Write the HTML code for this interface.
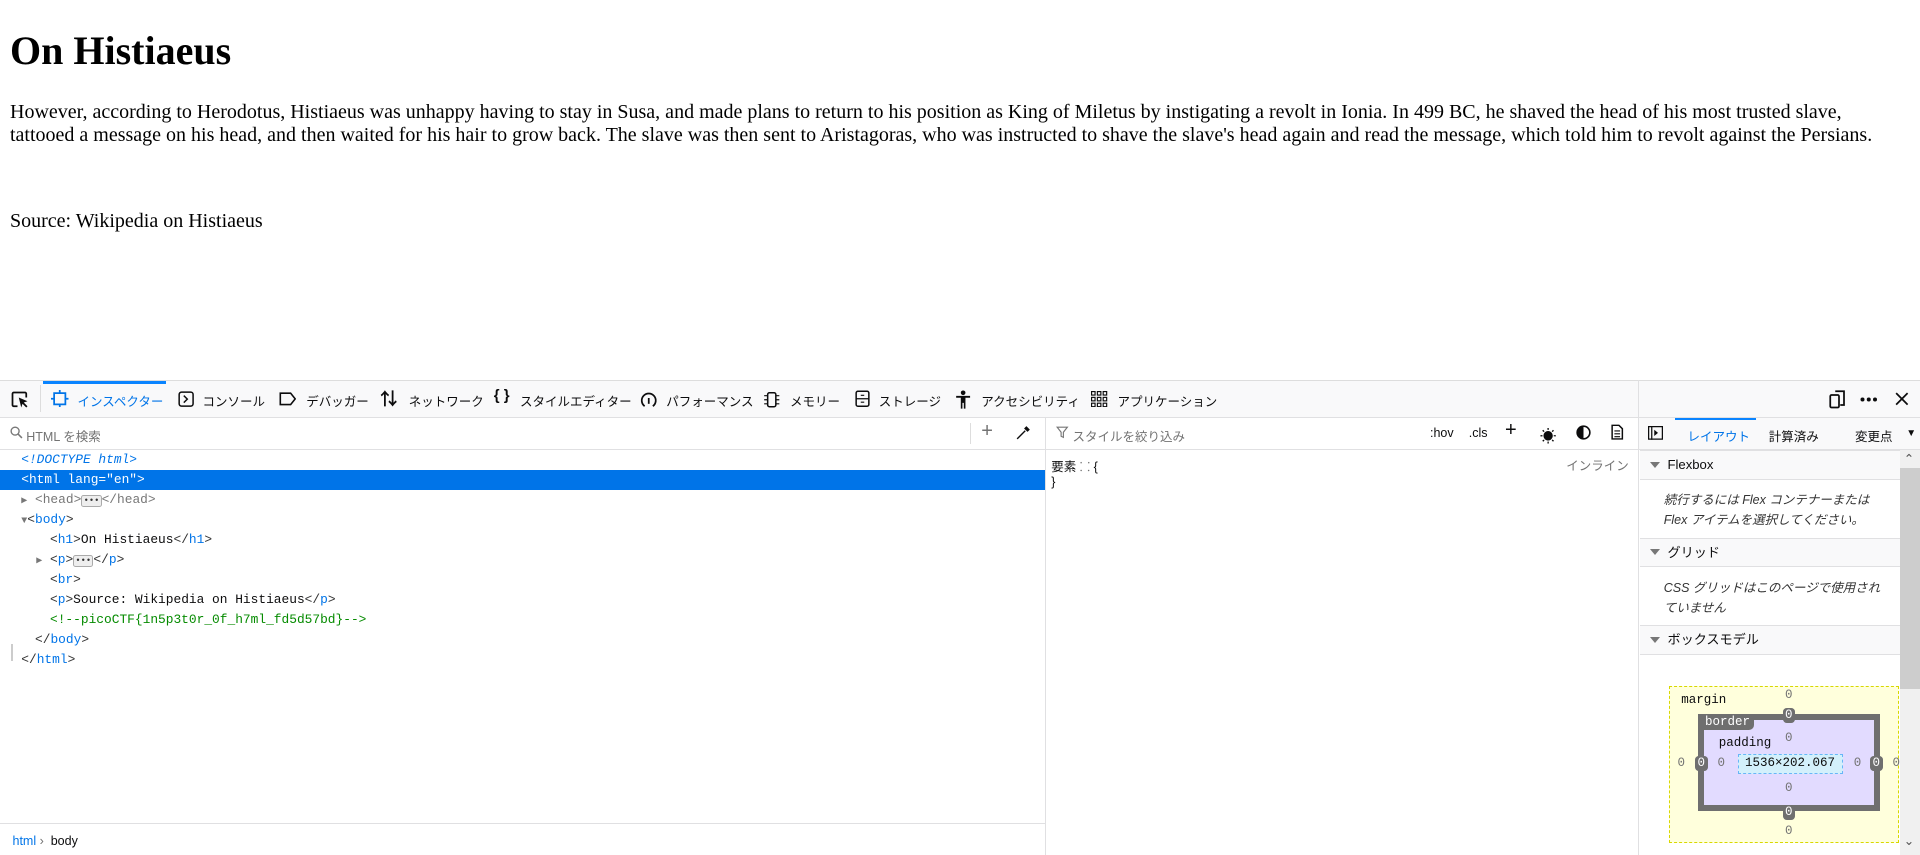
<!DOCTYPE html>
<html><head><meta charset="utf-8">
<style>
html,body{margin:0;padding:0;}
body{zoom:1.25;width:1536px;height:684px;overflow:hidden;position:relative;background:#fff;font-family:"Liberation Serif","Noto Serif CJK SC",serif;}
#page{position:absolute;left:0;top:0;width:1536px;height:305px;overflow:hidden}
#page .c{margin:8px}
#page h1{font-size:32px;margin:21.44px 0;font-weight:bold}
#page p{font-size:16px;margin:16px 0;line-height:18.4px}
#dt{position:absolute;left:0;top:304px;width:1536px;height:380px;font-family:"Liberation Sans","Noto Sans CJK JP",sans-serif;font-size:10px;color:#0c0c0d;}
.a{position:absolute;white-space:nowrap}
#tb{position:absolute;left:0;top:0;width:1536px;height:29px;background:#f9f9fa;border-top:1px solid #ddd;border-bottom:1px solid #e0e0e2}
#sr{position:absolute;left:0;top:30px;width:1536px;height:25px;border-bottom:1px solid #e0e0e2;background:#fff}
.ic{position:absolute;}
.g{color:#737373}
.mono{font-family:"Liberation Mono","DejaVu Sans Mono",monospace;font-size:10.3px}
.dl{position:absolute;left:0;width:836px;height:16px;line-height:16px}
.tag{color:#0074e8}
.b{color:#333}
.hd{position:absolute;left:1312px;width:208px;height:22px;background:#f9f9fa;border-top:1px solid #e0e0e2;border-bottom:1px solid #e0e0e2;line-height:22px;font-size:10.5px}
.it{position:absolute;left:1331px;font-style:italic;color:#333;font-size:10px;line-height:16px}
.tri{display:inline-block;width:0;height:0;border-left:4px solid transparent;border-right:4px solid transparent;border-top:5px solid #777;margin:0 6px 1px 8px}
.bx{font-family:"Liberation Mono",monospace;font-size:10px;line-height:12px}
.bd{background:#6f6f6f;color:#fff;padding:0 2px;border-radius:3px}
</style></head><body>
<div id="page"><div class="c">
<h1>On Histiaeus</h1>
<p>However, according to Herodotus, Histiaeus was unhappy having to stay in Susa, and made plans to return to his position as King of Miletus by instigating a revolt in Ionia. In 499 BC, he shaved the head of his most trusted slave, tattooed a message on his head, and then waited for his hair to grow back. The slave was then sent to Aristagoras, who was instructed to shave the slave's head again and read the message, which told him to revolt against the Persians.</p>
<br>
<p>Source: Wikipedia on Histiaeus</p>
</div></div>

<div id="dt">
<div id="tb">
 <svg class="ic" style="left:8px;top:7px" width="16" height="16" viewBox="0 0 16 16"><path d="M6 13H3a1 1 0 0 1-1-1V3a1 1 0 0 1 1-1h9a1 1 0 0 1 1 1v3" fill="none" stroke="#0c0c0d" stroke-width="1.4"/><path d="M7 6l7 3-3 1 3 3-1 1-3-3-1 3z" fill="#0c0c0d"/></svg>
 <div class="a" style="left:32px;top:3px;width:1px;height:22px;background:#ddd"></div>
 <div class="a" style="left:34px;top:0;width:99px;height:2px;background:#0a84ff"></div>
 <svg class="ic" style="left:41px;top:7px" width="14" height="14" viewBox="0 0 14 14"><rect x="2.5" y="2.5" width="9" height="9" fill="none" stroke="#0074e8" stroke-width="1.4"/><path d="M7 0v2.5M7 11.5V14M0 7h2.5M11.5 7H14" stroke="#0074e8" stroke-width="1.4"/></svg>
 <div class="a" style="left:62px;top:8px;color:#0074e8">インスペクター</div>
 <svg class="ic" style="left:142px;top:8px" width="13" height="13" viewBox="0 0 14 14"><rect x="1" y="1" width="12" height="12" rx="2" fill="none" stroke="#0c0c0d" stroke-width="1.3"/><path d="M5 4l3 3-3 3" fill="none" stroke="#0c0c0d" stroke-width="1.3"/></svg>
 <div class="a" style="left:162px;top:8px">コンソール</div>
 <svg class="ic" style="left:223px;top:9px" width="14" height="11" viewBox="0 0 15 12"><path d="M1 1h9l4 5-4 5H1z" fill="none" stroke="#0c0c0d" stroke-width="1.4"/></svg>
 <div class="a" style="left:245px;top:8px">デバッガー</div>
 <div class="a" style="left:304px;top:4px;font-size:14px;font-weight:bold">⇅</div>
 <div class="a" style="left:327px;top:8px">ネットワーク</div>
 <div class="a" style="left:395px;top:5px;font-size:12px;font-weight:bold">{ }</div>
 <div class="a" style="left:416px;top:8px">スタイルエディター</div>
 <svg class="ic" style="left:512px;top:8px" width="14" height="14" viewBox="0 0 15 15"><path d="M4 13A6 6 0 1 1 11 13" fill="none" stroke="#0c0c0d" stroke-width="1.5"/><path d="M7.5 11V6" stroke="#0c0c0d" stroke-width="1.5"/></svg>
 <div class="a" style="left:533px;top:8px">パフォーマンス</div>
 <svg class="ic" style="left:610px;top:8px" width="14" height="14" viewBox="0 0 15 15"><rect x="4" y="1.5" width="7" height="12" rx="1.5" fill="none" stroke="#0c0c0d" stroke-width="1.3"/><path d="M1 4h3M1 7.5h3M1 11h3M11 4h3M11 7.5h3M11 11h3" stroke="#0c0c0d"/></svg>
 <div class="a" style="left:632px;top:8px">メモリー</div>
 <svg class="ic" style="left:684px;top:7px" width="12" height="14" viewBox="0 0 13 15"><rect x="1" y="1" width="11" height="13" rx="1.5" fill="none" stroke="#0c0c0d" stroke-width="1.3"/><path d="M1 7.5h11M5 4.5h3M5 10.5h3" stroke="#0c0c0d"/></svg>
 <div class="a" style="left:703px;top:8px">ストレージ</div>
 <svg class="ic" style="left:764px;top:7px" width="13" height="15" viewBox="0 0 14 16"><circle cx="7" cy="2.3" r="2" fill="#0c0c0d"/><path d="M1 5h12v1.6H9V16H7.6v-5H6.4v5H5V6.6H1z" fill="#0c0c0d"/></svg>
 <div class="a" style="left:785px;top:8px">アクセシビリティ</div>
 <svg class="ic" style="left:873px;top:8px" width="13" height="13" viewBox="0 0 14 14" fill="none" stroke="#0c0c0d" stroke-width="1"><rect x="0.5" y="0.5" width="3" height="3"/><rect x="5.5" y="0.5" width="3" height="3"/><rect x="10.5" y="0.5" width="3" height="3"/><rect x="0.5" y="5.5" width="3" height="3"/><rect x="5.5" y="5.5" width="3" height="3"/><rect x="10.5" y="5.5" width="3" height="3"/><rect x="0.5" y="10.5" width="3" height="3"/><rect x="5.5" y="10.5" width="3" height="3"/><rect x="10.5" y="10.5" width="3" height="3"/></svg>
 <div class="a" style="left:894px;top:8px">アプリケーション</div>
 <svg class="ic" style="left:1463px;top:7px" width="14" height="15" viewBox="0 0 14 15"><rect x="1" y="4" width="7" height="10" rx="1" fill="none" stroke="#0c0c0d" stroke-width="1.4"/><path d="M5 1h7v11h-3" fill="none" stroke="#0c0c0d" stroke-width="1.4"/></svg>
 <svg class="ic" style="left:1488px;top:13px" width="14" height="4" viewBox="0 0 14 4"><circle cx="2" cy="2" r="1.6" fill="#0c0c0d"/><circle cx="7" cy="2" r="1.6" fill="#0c0c0d"/><circle cx="12" cy="2" r="1.6" fill="#0c0c0d"/></svg>
 <svg class="ic" style="left:1516px;top:9px" width="11" height="11" viewBox="0 0 12 12"><path d="M1 1l10 10M11 1L1 11" stroke="#0c0c0d" stroke-width="1.5"/></svg>
</div>

<div id="sr">
 <svg class="ic" style="left:8px;top:7px" width="10" height="10" viewBox="0 0 11 11"><circle cx="4.5" cy="4.5" r="3.5" fill="none" stroke="#777" stroke-width="1.2"/><path d="M7 7l3.5 3.5" stroke="#777" stroke-width="1.3"/></svg>
 <div class="a g" style="left:21px;top:7px">HTML を検索</div>
 <div class="a" style="left:776px;top:4px;width:1px;height:17px;background:#ddd"></div>
 <div class="a g" style="left:785px;top:2px;font-size:16px">+</div>
 <svg class="ic" style="left:813px;top:6px" width="12" height="12" viewBox="0 0 13 13"><path d="M1 12l7-7" stroke="#0c0c0d" stroke-width="1.2"/><path d="M9 1l3 3-2 2-3-3z" fill="#0c0c0d"/></svg>
 <div class="a" style="left:836px;top:0;width:1px;height:350px;background:#e0e0e2"></div>
 <svg class="ic" style="left:845px;top:7px" width="10" height="10" viewBox="0 0 11 11"><path d="M1 1h9L6.5 5.5V10L4.5 9V5.5z" fill="none" stroke="#777"/></svg>
 <div class="a g" style="left:858px;top:7px">スタイルを絞り込み</div>
 <div class="a" style="left:1144px;top:7px;font-size:10px">:hov</div>
 <div class="a" style="left:1175px;top:7px;font-size:10px">.cls</div>
 <div class="a" style="left:1204px;top:1px;font-size:16px">+</div>
 <div class="a" style="left:1232px;top:4px;font-size:13px">☀</div>
 <svg class="ic" style="left:1261px;top:6px" width="12" height="12" viewBox="0 0 13 13"><circle cx="6.5" cy="6.5" r="5.5" fill="none" stroke="#0c0c0d" stroke-width="1.4"/><path d="M6.5 1a5.5 5.5 0 0 0 0 11z" fill="#0c0c0d"/></svg>
 <svg class="ic" style="left:1289px;top:5px" width="10" height="13" viewBox="0 0 11 14"><path d="M1 1h6l3 3v9H1z" fill="none" stroke="#0c0c0d" stroke-width="1.3"/><path d="M3 6h5M3 8.5h5M3 11h5" stroke="#0c0c0d"/></svg>
 <div class="a" style="left:1310px;top:-30px;width:1px;height:380px;background:#e0e0e2"></div>
</div>

<div class="a" style="left:1311px;top:30px;width:225px;height:25px;background:#f9f9fa;border-bottom:1px solid #e0e0e2"></div>
<svg class="ic" style="left:1318px;top:37px" width="12" height="11" viewBox="0 0 12 11"><rect x="0.5" y="0.5" width="11" height="10" fill="none" stroke="#0c0c0d"/><path d="M3 0v11" stroke="#0c0c0d"/><path d="M5 3l3 2.5L5 8z" fill="#0c0c0d"/></svg>
<div class="a" style="left:1340px;top:30px;width:65px;height:2px;background:#0a84ff"></div>
<div class="a" style="left:1350px;top:37px;color:#0074e8">レイアウト</div>
<div class="a" style="left:1415px;top:37px">計算済み</div>
<div class="a" style="left:1484px;top:37px">変更点</div>
<div class="a" style="left:1525px;top:38px;font-size:8px">▼</div>

<div class="mono">
<div class="dl" style="top:56px;left:17px;color:#0074e8;font-style:italic">&lt;!DOCTYPE html&gt;</div>
<div class="dl" style="top:72px;background:#0074e8;color:#fff;padding-left:17px;width:819px">&lt;html lang="en"&gt;</div>
<div class="dl" style="top:88px;left:17px;color:#777"><span style="font-size:8px">▶</span> &lt;head&gt;<span style="display:inline-block;border:1px solid #aaa;background:#eee;border-radius:2px;font-size:7px;line-height:8px;padding:0 1px;color:#333">•••</span>&lt;/head&gt;</div>
<div class="dl" style="top:104px;left:17px"><span style="font-size:8px;color:#777">▼</span><span class="b">&lt;</span><span class="tag">body</span><span class="b">&gt;</span></div>
<div class="dl" style="top:120px;left:40px"><span class="b">&lt;</span><span class="tag">h1</span><span class="b">&gt;</span>On Histiaeus<span class="b">&lt;/</span><span class="tag">h1</span><span class="b">&gt;</span></div>
<div class="dl" style="top:136px;left:29px"><span style="font-size:8px;color:#777">▶</span> <span class="b">&lt;</span><span class="tag">p</span><span class="b">&gt;</span><span style="display:inline-block;border:1px solid #aaa;background:#eee;border-radius:2px;font-size:7px;line-height:8px;padding:0 1px;color:#333">•••</span><span class="b">&lt;/</span><span class="tag">p</span><span class="b">&gt;</span></div>
<div class="dl" style="top:152px;left:40px"><span class="b">&lt;</span><span class="tag">br</span><span class="b">&gt;</span></div>
<div class="dl" style="top:168px;left:40px"><span class="b">&lt;</span><span class="tag">p</span><span class="b">&gt;</span>Source: Wikipedia on Histiaeus<span class="b">&lt;/</span><span class="tag">p</span><span class="b">&gt;</span></div>
<div class="dl" style="top:184px;left:40px;color:#058b00">&lt;!--picoCTF{1n5p3t0r_0f_h7ml_fd5d57bd}--&gt;</div>
<div class="dl" style="top:200px;left:28px"><span class="b">&lt;/</span><span class="tag">body</span><span class="b">&gt;</span></div>
<div class="dl" style="top:216px;left:17px"><span class="b">&lt;/</span><span class="tag">html</span><span class="b">&gt;</span></div>
</div>
<div class="a" style="left:9px;top:211px;width:1px;height:14px;background:#ccc"></div>

<div class="a" style="left:0;top:354px;width:836px;height:1px;background:#e0e0e2"></div>
<div class="a" style="left:10px;top:363px;font-size:10px"><span style="color:#0074e8">html</span> <span class="g">›</span> &nbsp;body</div>

<div class="a" style="left:841px;top:61px;font-size:10px">要素 <span class="g">⸬</span> {</div>
<div class="a" style="left:841px;top:76px;font-size:10px">}</div>
<div class="a g" style="left:1253px;top:60px;font-size:10px">インライン</div>

<div class="hd" style="top:56px"><span class="tri"></span>Flexbox</div>
<div class="it" style="top:88px">続行するには Flex コンテナーまたは<br>Flex アイテムを選択してください。</div>
<div class="hd" style="top:126px"><span class="tri"></span>グリッド</div>
<div class="it" style="top:158px">CSS グリッドはこのページで使用され<br>ていません</div>
<div class="hd" style="top:196px"><span class="tri"></span>ボックスモデル</div>

<div class="a" style="left:1520px;top:56px;width:16px;height:324px;background:#f0f0f0"></div>
<div class="a" style="left:1520px;top:70px;width:16px;height:177px;background:#cdcdcd"></div>
<div class="a" style="left:1523px;top:57px;font-size:10px;color:#555">⌃</div>
<div class="a" style="left:1523px;top:362px;font-size:10px;color:#555">⌄</div>

<!-- box model -->
<div class="a" style="left:1335px;top:245px;width:184px;height:125px;background:#ffffdc;border:1px dashed #d8d800;box-sizing:border-box"></div>
<div class="a bx" style="left:1345px;top:250px">margin</div>
<div class="a bx g" style="left:1428px;top:246px">0</div>
<div class="a" style="left:1358px;top:267px;width:146px;height:78px;background:#e2dbff;border:5px solid #6f6f6f;box-sizing:border-box"></div>
<div class="a bx" style="left:1361px;top:268px;background:#6f6f6f;color:#fff;padding:0 3px;border-radius:0 0 4px 0">border</div>
<div class="a bx" style="left:1375px;top:285px">padding</div>
<div class="a bx g" style="left:1428px;top:281px">0</div>
<div class="a bx" style="left:1390px;top:299px;width:84px;height:16px;background:#d3f0fb;border:1px dashed #68b6f7;box-sizing:border-box;line-height:14px;text-align:center">1536×202.067</div>
<div class="a bx g" style="left:1374px;top:301px">0</div>
<div class="a bx g" style="left:1483px;top:301px">0</div>
<div class="a bx g" style="left:1428px;top:321px">0</div>
<div class="a bx g" style="left:1342px;top:301px">0</div>
<div class="a bx g" style="left:1514px;top:301px">0</div>
<div class="a bx g" style="left:1428px;top:355px">0</div>
<div class="a bx bd" style="left:1426px;top:262px">0</div>
<div class="a bx bd" style="left:1426px;top:340px">0</div>
<div class="a bx bd" style="left:1356px;top:301px">0</div>
<div class="a bx bd" style="left:1496px;top:301px">0</div>
</div>
</body></html>
